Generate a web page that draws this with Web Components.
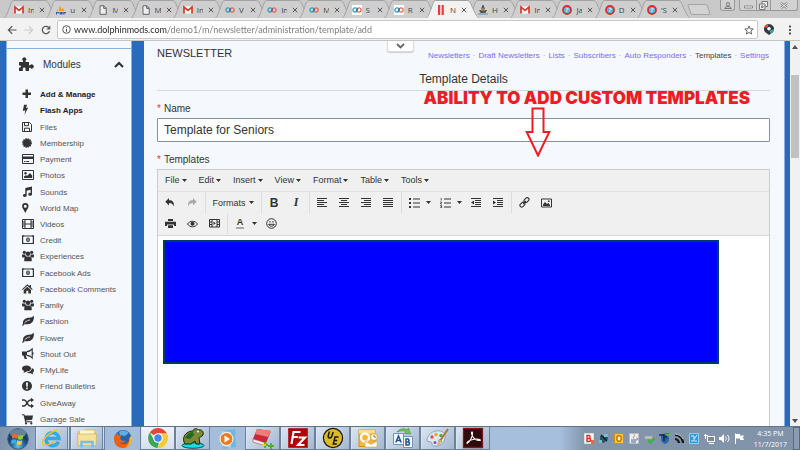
<!DOCTYPE html>
<html lang="en">
<head>
<meta charset="utf-8">
<title>Newsletter – Template Details</title>
<style>
  html, body { height: 100%; }
  body { margin: 0; overflow: hidden; font-family: "Liberation Sans", Arial, sans-serif; }
</style>
</head>
<body>
<app-window></app-window>
<script>
const AA = 'fill="none" stroke="currentColor"';
const infinity = bg => `${bg ? '<path fill="#fff" d="M0 0h10v10H0z"/>' : ''}<circle cx="3" cy="5" r="2.1" fill="none" stroke="#2ba3b5" stroke-width="1.3"/><circle cx="7" cy="5" r="2.1" fill="none" stroke="#ec6a4c" stroke-width="1.3"/><path d="M4 6.6 6 3.4" stroke="#3568d4" stroke-width="1.3"/>`;
const bars = (a) => a.map((r, i) => `<path d="M${r[0]} ${i * 2 + 1.5}h${r[1]}"/>`).join('');
const ICONS = {
  gmail: [10, 10, '<path fill="#fff" d="M1 1.5h8v7H1z"/><path d="M1 8.5V2l4 3.4L9 2v6.5" fill="none" stroke="#d8392f" stroke-width="1.7"/>'],
  pma: [10, 10, '<path fill="#f29b1c" d="M3 6C2.600 4 3 2 4.400.6 4.600 2.400 5 4 6.400 6zM6 6c0-1.600.2-2.600 1-3.400.2 1.400.8 2.400 1.800 3.400zM.6 6 2 3.600V6z"/><path fill="#36589e" d="M0 7h3v1.300H1V9.500H0zM3.600 7h3v2.500H3.600zM7.200 7H10v1.300H8.500v1.200H7.200z"/>'],
  page: [10, 10, '<path d="M2 .8h4l2.200 2.200v6.300H2zM5.700.8V3.400h2.500" fill="#eee" stroke="#666"/>'],
  loop: [10, 10, infinity(false)],
  loopw: [10, 10, infinity(true)],
  redbars: [10, 10, '<path fill="#ee3a34" d="M2 0h2.200v10H2zM5.600 0h2.200v10H5.600z"/>'],
  boat: [10, 10, '<path fill="#4a5960" d="M4.500 0h1l1.500 4H3zM1 5h8L7.500 8h-5z"/><path fill="#d78b42" d="M3 3.500h4v2H3z"/><path d="M0 9h10" stroke="#6c8c98"/>'],
  joomla: [10, 10, '<circle cx="5" cy="5" r="4" fill="#54b9e4" stroke="#e02a2f" stroke-width="1.800"/><path d="M4 3l2.500 1-2 1.500.5 1.500" fill="none" stroke="#d9f1fb" stroke-width=".9"/>'],
  close: [6, 6, `<path ${AA} d="M.8.8l4.400 4.400M5.200.8.8 5.200"/>`],
  back: [10, 10, `<path ${AA} stroke-width="1.200" d="M9.500 5H1.500M5.200 1.200 1.400 5l3.800 3.800"/>`],
  forward: [10, 10, `<path ${AA} stroke-width="1.200" d="M.5 5h8M4.800 1.200 8.600 5 4.800 8.800"/>`],
  reload: [10, 10, `<path ${AA} stroke-width="1.300" d="M8.500 6.300A3.700 3.700 0 1 1 7.700 2.400"/><path fill="currentColor" d="M9.300.5v4H5.300z"/>`],
  info: [9, 9, `<circle cx="4.500" cy="4.500" r="3.800" ${AA}/><path ${AA} d="M4.500 4v2.800M4.500 2.200v1"/>`],
  star: [10, 10, `<path ${AA} stroke-width=".9" d="M5 1l1.200 2.800 3 .2-2.300 2 .7 3L5 7.500 2.400 9l.7-3-2.300-2 3-.2z"/>`],
  pin2: [10, 11, '<path fill="#2f3b42" d="M5 0a5 5 0 0 1 4 8L5 11 1 8A5 5 0 0 1 5 0z"/><path fill="#e04b3a" d="M0 4a5 5 0 0 1 4-4v3z"/><path fill="#2fb3a2" d="M10 5a5 5 0 0 1-3 5L5.500 7z"/><circle cx="5" cy="4.800" r="1.800" fill="#fff"/>'],
  dots: [4, 10, '<path fill="currentColor" d="M1 .5h2v2H1zM1 4h2v2H1zM1 7.500h2v2H1z"/>'],
  puzzle: [15, 14, '<path fill="currentColor" d="M0 5h4V3.800a2 2 0 1 1 2.600 0V5H10v3.200h1.200a2 2 0 1 1 0 2.600H10V14H6.600v-2a1.400 1.400 0 0 0-2.800 0v2H0v-3.500h1a1 1 0 0 0 0-2H0z"/>'],
  up: [10, 7, `<path ${AA} stroke-width="2.200" d="M1 6l4-4 4 4"/>`],
  down: [9, 6, `<path ${AA} stroke-width="1.800" d="M1 1l3.500 3.500L8 1"/>`],
  plus: [12, 12, '<path fill="currentColor" d="M3.500 1.500h2.500v3h3V7H6v3H3.500V7h-3V4.500h3z"/>'],
  bolt: [12, 12, '<path fill="currentColor" d="M2 .8h3L4 4l2.200-.4L2.500 11l.8-4.800L.8 7z"/>'],
  save: [12, 12, `<path ${AA} d="M.5 1.500h7l2 2v7h-9zM2.500 1.500v3.200h4V1.500M2.500 10.500V7.200h5v3.300"/>`],
  seal: [12, 12, '<circle cx="5" cy="6" r="4" fill="currentColor"/><circle cx="5" cy="6" r="4.300" fill="none" stroke="currentColor" stroke-width="1.200" stroke-dasharray="1.400 .85"/>'],
  card: [12, 12, `<path ${AA} d="M.5 1.500h11v9H.5z"/><path fill="currentColor" d="M0 3.500h12V6H0zM2 8h1.500v1H2zM4.300 8H7v1H4.300z"/>`],
  photo: [12, 12, `<path ${AA} d="M.5 1.500h11v9H.5z"/><circle cx="3.500" cy="4.200" r="1.200" fill="currentColor"/><path fill="currentColor" d="M2 9V7.500L4 6l1 1 3-3 2.200 2.500V9z"/>`],
  music: [12, 12, '<path fill="currentColor" d="M3.300 2 10 .5v7.800a1.900 1.500 0 1 1-1.400-1.400V3.800L4.700 4.700v4.600A1.900 1.500 0 1 1 3.300 8z"/>'],
  marker: [12, 12, '<path fill="currentColor" fill-rule="evenodd" d="M3.300 1a3.200 3.200 0 0 1 3.200 3.300C6.500 6 4.500 8.500 3.300 11 2.100 8.500.1 6 .1 4.300A3.200 3.200 0 0 1 3.300 1zm0 1.700a1.500 1.500 0 1 0 0 3 1.500 1.500 0 0 0 0-3z"/>'],
  film: [12, 12, `<path ${AA} d="M.5 1.500h11v9H.5zM3 1.500v9M9 1.500v9M3 6h6M.5 4H3M.5 6H3M.5 8H3M9 4h2.500M9 6h2.500M9 8h2.500"/>`],
  money: [12, 12, `<path ${AA} stroke-width="1.200" d="M.6 2h10.800v7.500H.6z"/><path fill="currentColor" d="M0 1.500h2.500L0 4zM12 1.500H9.500L12 4zM0 10h2.500L0 7.500zM12 10H9.500L12 7.500z"/><ellipse cx="6" cy="5.700" rx="1.900" ry="2.300" fill="currentColor"/><path d="M6 4.300v2.800" stroke="#f5f8fd" stroke-width=".8"/>`],
  users: [12, 12, '<g fill="currentColor"><circle cx="2.300" cy="2.300" r="1.600"/><circle cx="9.700" cy="2.300" r="1.600"/><circle cx="6" cy="3.800" r="2.300"/><path d="M0 4.500h3.300c0 1.400.6 1.800 1 2.200L3 7.500H.8C0 7.300 0 6 0 4.500zM12 4.500H8.700c0 1.400-.6 1.800-1 2.200L9 7.500h2.200c.8-.2.8-1.500.8-3zM2.300 11.300C2 8.500 2.800 6.500 4 6.500h4c1.200 0 2 2 1.700 4.800z"/></g>'],
  home: [12, 12, '<path fill="currentColor" d="M0 6.200 5.300 1.300 7.500 3.300V2H9v2.600l1.700 1.600-.7.800-4.700-4.200L.7 7zM1.700 7l3.600-3.200L9 7v3.500H6.300V7.700h-2v2.800H1.700z"/>'],
  leaf: [12, 12, '<path fill="currentColor" d="M11.800.8c.6 5-1.800 8.400-6 8.400-1.500 0-2.600-.2-3.600.2L.8 11 0 10.200l1-1.300C.6 4.200 4 3 7.300 2.800 9.500 2.600 10.500 2 11.800.8z"/><path d="M2.500 8C4.500 5.800 6 5.200 8 5" fill="none" stroke="#f5f8fd" stroke-width=".8"/>'],
  horn: [12, 12, `<path fill="currentColor" d="M0 3.500h5v4H3.700L5 11H2.700L1.500 7.500H0z"/><path ${AA} stroke-width="1.100" d="M5 3.600C7.500 3.500 9 2.200 10.200 1v9C9 8.600 7.500 7.500 5 7.400M11 4.500v2"/>`],
  chat: [12, 12, '<g fill="currentColor"><path d="M4.500 1.500c2.500 0 4.500 1.300 4.500 3S7 7.500 4.500 7.500L1.500 9l.6-2C.8 6.500 0 5.500 0 4.500c0-1.700 2-3 4.500-3z"/><path d="M9.800 4c1.400.5 2.200 1.400 2.200 2.500 0 .8-.5 1.600-1.400 2.100l.8 1.900-2.700-1.300c-1.600.1-3-.3-3.900-1C7.700 8.300 9.800 6.600 9.800 4z"/></g>'],
  alert: [12, 12, '<circle cx="5" cy="6" r="5" fill="currentColor"/><path fill="#f5f8fd" d="M4 2.500h2l-.3 4.200H4.300zM4.200 7.600h1.600v1.600H4.200z"/>'],
  shuffle: [12, 12, `<path ${AA} stroke-width="1.500" d="M0 3h2.200c2.600 0 3 6 6 6H9.500M0 9h2.200c2.600 0 3-6 6-6H9.500"/><path fill="currentColor" d="M9 .8 12 3 9 5.200zM9 6.800 12 9l-3 2.200z"/>`],
  cart: [12, 12, `<path fill="currentColor" d="M0 1.300h2.400l.3 1.200H11l-.8 4.200-6.300.8.2.8h6v1H3.200L1.600 2.300H0z"/><circle cx="4" cy="10.400" r="1.100" fill="currentColor"/><circle cx="9.300" cy="10.400" r="1.100" fill="currentColor"/>`],
  caret: [5, 3, '<path fill="currentColor" d="M0 0h5L2.500 3z"/>'],
  undo: [10, 9, '<path fill="currentColor" d="M4 0v2.300c3.500 0 5.500 1.700 4.700 6.200C8 6 6.500 5 4 5v2.500L.3 3.700z"/>'],
  redo: [10, 9, '<path fill="#aaa" d="M6 0v2.300C2.500 2.300.5 4 1.300 8.500 2 6 3.500 5 6 5v2.500l3.700-3.800z"/>'],
  left: [10, 11, `<g ${AA}>${bars([[0,10],[0,7],[0,10],[0,7],[0,10]])}</g>`],
  center: [10, 11, `<g ${AA}>${bars([[0,10],[2,6],[0,10],[2,6],[0,10]])}</g>`],
  right: [10, 11, `<g ${AA}>${bars([[0,10],[3,7],[0,10],[3,7],[0,10]])}</g>`],
  full: [10, 11, `<g ${AA}>${bars([[0,10],[0,10],[0,10],[0,10],[0,10]])}</g>`],
  bullets: [11, 10, `<path fill="currentColor" d="M0 0h2v2H0zM0 4h2v2H0zM0 8h2v2H0z"/><path ${AA} stroke-width="1.200" d="M4 1h7M4 5h7M4 9h7"/>`],
  numbers: [11, 10, `<path ${AA} stroke-width=".8" d="M1.200 0v2.500M.2 4h1.500L.4 6h1.500M.2 7.700h1.500v2H.2M.7 8.700h1"/><path ${AA} stroke-width="1.200" d="M4 1h7M4 5h7M4 9h7"/>`],
  outdent: [10, 11, `<g ${AA}>${bars([[0,10],[4,6],[4,6],[4,6],[0,10]])}</g><path fill="currentColor" d="M3 3.500v4l-3-2z"/>`],
  indent: [10, 11, `<g ${AA}>${bars([[0,10],[4,6],[4,6],[4,6],[0,10]])}</g><path fill="currentColor" d="M0 3.500v4l3-2z"/>`],
  link: [11, 11, `<g ${AA} stroke-width="1.100"><rect x="5" y="1.500" width="5.500" height="3.500" rx="1.700" transform="rotate(-45 7.500 3.500)"/><rect x=".6" y="5.800" width="5.500" height="3.500" rx="1.700" transform="rotate(-45 3.500 7.500)"/><path d="M4 7l3-3"/></g>`],
  image: [11, 10, `<path ${AA} d="M.5 1h10v8H.5z"/><path fill="currentColor" d="M2 8V6.500L4 4l2 2 1.500-1L9 7v1zM7 2.500h1.500V4H7z"/>`],
  print: [11, 9, '<path fill="currentColor" d="M3 0h5v2H3zM0 2.700h11V7H9V5.500H2V7H0zM3 6.300h5V9H3z"/>'],
  eye: [11, 8, `<path ${AA} d="M.5 4C3 .3 8 .3 10.500 4 8 7.700 3 7.700.5 4z"/><circle cx="5.500" cy="3.700" r="2" fill="currentColor"/>`],
  media: [11, 9, `<path ${AA} d="M.5.500h10v7.500H.5zM3 .5v7.500M8 .5v7.500M.5 3H3M.5 5.500H3M8 3h2.500M8 5.500h2.500"/><path fill="currentColor" d="M4.500 2.500 6.800 4.300 4.500 6z"/>`],
  smiley: [11, 11, `<circle cx="5.500" cy="5.500" r="4.800" ${AA}/><path ${AA} d="M2.600 6.300c1 2.500 4.800 2.500 5.800 0zM4 3v1.700M7 3v1.700"/>`],
  arrow: [26, 50, '<path fill="none" stroke="#ee1c25" stroke-width="2" d="M7.500 1.500h11V25h5.800L13 48.500 1.700 25h5.800z"/>'],
  user: [8, 7, `<circle cx="4" cy="2.300" r="1.700" ${AA}/><path ${AA} d="M.5 6.500C1 4 7 4 7.500 6.500z"/>`],
  min: [9, 8, '<path fill="#fff" stroke="#888" d="M.5 5h8v2h-8z"/>'],
  restore: [9, 9, `<path fill="#eee" stroke="#777" d="M3 .5h5.500v5H3z"/><path fill="#eee" stroke="#777" d="M.5 3H6v5.500H.5zM2.500 5H4v1.500H2.500z"/>`],
  wclose: [8, 7, '<path d="M1 1l6 5M7 1 1 6" stroke="#888" stroke-width="2.400"/><path d="M1 1l6 5M7 1 1 6" stroke="#eee"/>'],
  triup: [6, 4, '<path fill="#505050" d="M0 4 3 0l3 4z"/>'],
  tridown: [6, 4, '<path fill="#505050" d="M0 0h6L3 4z"/>'],
  win: [22, 22, '<defs><radialGradient id="g" cy=".85"><stop stop-color="#5fc5ee"/><stop offset=".6" stop-color="#246ea8"/><stop offset="1" stop-color="#173f68"/></radialGradient></defs><circle cx="11" cy="11" r="10.300" fill="url(#g)" stroke="#3f5d7a"/><ellipse cx="11" cy="5.500" rx="8" ry="4.300" fill="#fff" opacity=".35"/><path fill="#f0652e" d="M5.500 6.500c2-1.200 3.500-1 5 0l-.8 4.300c-1.700-1-3.200-1-5 0z"/><path fill="#94c83d" d="M11.500 7c1.500.9 3.200.8 5-.2l-.9 4.300c-1.600.9-3.200.9-5 0z"/><path fill="#3fa9e0" d="M4.500 12c1.800-1 3.300-1 5 0l-.8 4c-1.500-.9-3.200-1-5 0z"/><path fill="#fdc82f" d="M10.300 12.300c1.800.9 3.400.9 5 0l-.8 4c-1.700.9-3.500.8-5 0z"/>'],
  ie: [22, 22, '<path fill="none" stroke="#35a9e0" stroke-width="3.500" d="M17.500 14.800A6.500 6.500 0 1 1 18 11.500H6"/><ellipse cx="11" cy="10.500" rx="11" ry="4.500" fill="none" stroke="#f0c22e" stroke-width="1.600" transform="rotate(-38 11 11)" stroke-dasharray="34 11" stroke-dashoffset="-13"/>'],
  folder: [22, 22, '<path fill="#e5c66b" d="M1.500 4h7l1-2h10v17h-18z"/><path fill="#fff6cf" d="M4 3.500h14v5H4z"/><path fill="#f7e29a" stroke="#c9a94d" stroke-width=".6" d="M1.500 7h19l-.5 11.500H2z"/><path fill="none" stroke="#72c0e5" stroke-width="2.500" d="M5.500 20.500V15h11v5.500"/>'],
  firefox: [22, 22, '<circle cx="11" cy="10.500" r="8.500" fill="#2a62a8"/><path fill="#57b2e5" d="M7 4c3-2.500 8-1.500 9.500 1L13 8 8 7z"/><path fill="#e8611c" d="M19.500 7c2 7-2 13-8.500 13C4 20 .5 14 2.500 7l1.500 1L5 4.500l2 2.800 2.500.2L8 10c1 3 4.500 3.500 6 2.500-1 2.500-4 3-6 2 3 3 9 1.500 9.500-4.500z"/><path fill="#fbc02d" d="M19.500 7c1.800 6-1 11-6 12.500 3-2.500 4.500-5 4-9z"/>'],
  chrome: [22, 22, '<path fill="#e2473a" d="M11 11 2.800 5.500A10 10 0 0 1 20 6.500H11z"/><path fill="#fbcb34" d="M11 6.500h9A10 10 0 0 1 10.500 21l4.300-8z"/><path fill="#3aa757" d="M10.500 21A10 10 0 0 1 2.800 5.500L7 13l5 2z"/><circle cx="11" cy="11" r="4.800" fill="#fff"/><circle cx="11" cy="11" r="3.700" fill="#4688ef"/>'],
  frog: [24, 22, '<ellipse cx="12" cy="18.500" rx="11" ry="2.800" fill="#15dbe6" stroke="#123" stroke-width=".8"/><path fill="#7b8a34" stroke="#1c270b" d="M3 15C1 9 6 4 12 4c1-3 4-3 5-1 4-1 6 2 5 5-1 2-4 2-4 3l1 6h-4l-1-3-4 3H4z"/><path fill="#1d6b22" d="M4 11c2-4 5-6 8-6l1 3-4 4z"/><circle cx="17" cy="4.500" r="1" fill="#fff"/>'],
  player: [22, 22, '<path fill="#71b7dc" d="M4 3l14-2 1 18-13 2z"/><path fill="#a7d6ee" d="M4 3l10 1v16l-9-2z"/><circle cx="9.500" cy="11" r="6.500" fill="#f17a1d" stroke="#fff"/><path fill="#fff" d="M7.500 7.500v7l5.500-3.500z"/>'],
  redbook: [22, 22, '<path fill="#c92935" d="M5 2l14 2-5 12L1 12z"/><path fill="#f07b7b" d="M5 2l14 2-3 6L3 7z"/><path fill="#eee" stroke="#a33" stroke-width=".5" d="M1 12l13 4v3L1 15z"/><path d="M10 18h6M13 15v6M16 19h6M19 16v6" stroke="#4fae2d" stroke-width="1.800"/><path d="M10 18h4" stroke="#f5ce2a" stroke-width="1.800"/>'],
  fz: [22, 22, '<path fill="#b30000" stroke="#8d0000" stroke-dasharray="1 1" d="M1.500 1.500h19v19h-19z"/><path d="M4.500 17 6.500 5h7M5.800 10h5M11.500 10.500h6.500L11 18h6.500" fill="none" stroke="#fff" stroke-width="2.200"/>'],
  ue: [22, 22, '<circle cx="11" cy="11" r="9.600" fill="#ddb92c" stroke="#19150a" stroke-width="1.200"/><path d="M7.500 4.500 6.200 9c-.4 2.600 3 2.600 3.600.3L11.200 5M16.500 10h-3.500l-1.700 7h3.500M12.300 13.500h3" fill="none" stroke="#1b160a" stroke-width="1.500"/>'],
  outlook: [22, 22, '<path fill="#f4b832" stroke="#d58f16" d="M2 2.500h16v17H2z"/><path d="M2 2.500h16v4H2z" fill="#fcdf83"/><circle cx="8" cy="10.500" r="4" fill="none" stroke="#fff" stroke-width="2.300"/><path fill="#fff" stroke="#d9a53a" stroke-width=".6" d="M8 14h12v6H8zl6 3.500 6-3.500"/><circle cx="17" cy="10" r="3.500" fill="#fff8e0" stroke="#d9a53a"/><path d="M17 8v2h2" stroke="#777" fill="none"/>'],
  ab: [22, 22, '<path fill="#f4f8fd" stroke="#7193bb" d="M1.500 6.500h10v11h-10zM11.500 9.500h9v11h-9z"/><path d="M3.800 15.500 6.500 9l2.700 6.500M4.800 13.500h3.400M14 12v6h2.300c1.500 0 1.500-3 0-3H14h2c1.300 0 1.300-3 0-3z" fill="none" stroke="#22558d" stroke-width="1.500"/><path fill="#75c15a" stroke="#3b8f2b" stroke-width=".6" d="M5 5c3-4 8-4 10-2l1.500-2 2 6-6-.5 1.500-2C12 3.500 9 3.500 5 5z"/>'],
  paint: [24, 22, '<path fill="#dbeaf5" stroke="#7898b2" stroke-width=".8" d="M10 4c6-1 10 2 9 7s-6 9-11 8c-3-.5-1-3-3-4s-4 .5-4-2 3-8 9-9z"/><circle cx="6" cy="10" r="1.700" fill="#e14d3b"/><circle cx="10" cy="7.500" r="1.700" fill="#f0a42b"/><circle cx="15" cy="8.500" r="1.700" fill="#48ab4c"/><circle cx="14" cy="14" r="1.800" fill="#3a7dd0"/><circle cx="9" cy="15.500" r="1.500" fill="#8550b8"/><path d="M22 2 14 14" stroke="#b77533" stroke-width="2"/><path d="M14.500 13 12 18" stroke="#e8b24a" stroke-width="2.500"/>'],
  acrobat: [22, 22, '<path fill="#2d0b0b" stroke="#7d1a15" stroke-width="1.300" d="M1.500 1.500h19v19h-19z"/><path d="M5 16.500c3-2 6-7 5.500-11-.2-1-1.300-.5-1 1 .7 4 4 7 7.500 7s0-2.200-5-1.200-7.500 3-7 4.200z" fill="none" stroke="#fff" stroke-width="1.100"/>'],
  t1: [10, 11, '<path fill="#fff" stroke="#ddd" d="M.5.500h9v10h-9z"/><path d="M3 2.500v6h2.300c1.700 0 1.700-3 0-3H3h2c1.500 0 1.500-3 0-3z" fill="none" stroke="#e02727" stroke-width="1.400"/><path fill="#f06a2a" d="M7 7h3v4H7z"/>'],
  t2: [10, 11, '<path fill="#29556d" d="M1 3h8v3l-4 4-4-1z"/><path fill="#6fc0d8" d="M5 1h4v3H5zM0 7h3v3H0z"/><path d="M2 2l6 6" stroke="#122" stroke-width="1.500"/>'],
  t3: [10, 11, '<path fill="#f7c840" stroke="#d48c10" d="M.5.500h9v10h-9z"/><ellipse cx="5" cy="5.500" rx="2.200" ry="2.800" fill="#fff3b5" stroke="#bb6c08" stroke-width="1.300"/>'],
  t4: [10, 11, '<path fill="#eceff2" stroke="#bbb" d="M.5.500h9v10h-9z"/><path d="M2 7h5c2 0 2-2 .5-2M2 9h5" fill="none" stroke="#3f6d9d"/><path d="M5 5.500c-2-2 2-2 0-4" fill="none" stroke="#df6a27"/>'],
  t5: [11, 11, '<path fill="#c5c8c9" stroke="#999" d="M.5 3h8v3h-8z"/><path d="M4 7l2.500 2.500L10.500 5" fill="none" stroke="#37b53b" stroke-width="2"/>'],
  t6: [11, 11, '<path fill="#2c62ad" d="M2 1l8-1v6c0 3-2 4-4 5C3 10 2 8 2 6z"/><path d="M0 2h5v6M4 4h4" stroke="#142b4a" stroke-width="1.500" fill="none"/><path fill="#4dc24c" d="M6 1h4v3z"/>'],
  t7: [10, 11, '<path d="M1 2c5 0 8 4 8 8M1 6c2 0 4 2 4 4" stroke="#161616" stroke-width="2.200" fill="none"/><path d="M1 1c3 0 7 2 8 5" stroke="#ccc" fill="none"/>'],
  t8: [10, 11, '<path fill="#2c9bda" stroke="#8dd1f4" d="M.5.500h9v10h-9z"/><path d="M2 3h3v3M8 2 4 8H2M5 8h3" stroke="#d5f0fd" fill="none"/>'],
  t9: [11, 11, '<path fill="#7d8894" stroke="#fff" d="M3.500 3.500h7v5h-7z"/><path d="M1.500 1v5M0 2.500h4M5 10.500h5" stroke="#fff"/>'],
  t10: [11, 11, '<path fill="#fff" d="M0 4h2l3-3v9L2 7H0z"/><path d="M6.500 3.500c1 1.500 1 2.500 0 4M8.500 2c2 2.500 2 4.500 0 7" stroke="#fff" fill="none"/>'],
  t11: [11, 11, '<path d="M1.500.5V11" stroke="#fff"/><path fill="#fff" d="M2 1h4v1.500h4L9 4.500 10 7H6V5.500H2z"/>']
};

function define(name, html, after) {
  const t = document.createElement('template');
  t.innerHTML = html;
  customElements.define(name, class extends HTMLElement {
    constructor() {
      super();
      this.attachShadow({ mode: 'open' }).append(t.content.cloneNode(true));
    }
    connectedCallback() { if (after) after(this.shadowRoot, this); }
  });
}

/* Puts the icon named by the host's icon attribute before the slotted label. */
function leadingIcon(root, el) {
  const holder = root.querySelector('.icon');
  if (holder.firstChild) return;
  const icon = document.createElement('ui-icon');
  icon.setAttribute('name', el.getAttribute('icon'));
  holder.append(icon);
}

define('ui-icon', `<style>:host{display:inline-flex;flex:none}svg{display:block}</style>`, (root, el) => {
  if (root.querySelector('svg')) return;
  const [w, h, body] = ICONS[el.getAttribute('name')];
  const box = document.createElement('template');
  box.innerHTML = `<svg width="${w}" height="${h}" viewBox="0 0 ${w} ${h}" aria-hidden="true">${body}</svg>`;
  root.append(box.content);
});

/* ---------- browser chrome ---------- */
define('browser-tab', `<style>
  :host{display:flex;align-items:center;position:relative;min-width:0;color:#444;font:8px "Open Sans","Noto Sans",sans-serif;gap:4px;padding:2px 0 0 8px;box-sizing:border-box}
  .shape{position:absolute;inset:0 -9px 0 -2px;z-index:0}
  .shape svg{width:100%;height:100%;display:block}
  path{fill:#cfcfcf;stroke:#a2a2a2;vector-effect:non-scaling-stroke}
  :host([active]){z-index:1}
  :host([active]) path{fill:#f2f2f2}
  .icon,.title,button{position:relative;z-index:1}
  .icon{display:flex}
  .title{width:6px;overflow:hidden;white-space:nowrap;line-height:12px}
  button{border:0;padding:0;background:none;color:#555;line-height:0;margin-left:1px}
</style><div class="shape"><svg viewBox="0 0 53 18" preserveAspectRatio="none"><path d="M-1 19C2 18 3 14 5 9S7 .5 10 .5H41C44 .5 45 5 47 9S51 18 54 19"/></svg></div>
<span class="icon"></span><span class="title"><slot></slot></span><button aria-label="Close tab"><ui-icon name="close"></ui-icon></button>`, leadingIcon);

define('tab-strip', `<style>
  :host{display:flex;height:18px;background:#c9c9c9;overflow:hidden}
  .tabs{flex:1;display:grid;grid-template-columns:repeat(16,1fr);padding-left:6px}
  .new{width:20px;height:11px;border:1px solid #a5a5a5;border-radius:2px;background:#d3d3d3;transform:skewX(20deg);margin:4px 0 0 8px;padding:0}
  .win{display:flex;margin:0 2px 0 11px;align-items:flex-start;color:#777}
  .win button{height:11px;border:1px solid #999;border-top:0;background:#d2d2d2;padding:0;display:flex;align-items:center;justify-content:center;color:#777}
  .u{width:15px;border-radius:0 0 3px 3px;margin-right:4px}
  .m{width:18px;border-radius:0 0 0 3px}.r{width:14px;border-left:0!important}.c{width:27px;border-left:0!important;border-radius:0 0 3px 0}
</style><div class="tabs">
<browser-tab icon="gmail">In</browser-tab><browser-tab icon="pma">u</browser-tab><browser-tab icon="page">M</browser-tab><browser-tab icon="page">M</browser-tab><browser-tab icon="gmail">In</browser-tab><browser-tab icon="loop">V</browser-tab><browser-tab icon="loop">In</browser-tab><browser-tab icon="loop">M</browser-tab><browser-tab icon="loopw">S</browser-tab><browser-tab icon="loopw">R</browser-tab><browser-tab icon="redbars" active>N</browser-tab><browser-tab icon="boat">H</browser-tab><browser-tab icon="gmail">In</browser-tab><browser-tab icon="joomla">Ja</browser-tab><browser-tab icon="joomla">D</browser-tab><browser-tab icon="joomla">'S</browser-tab>
</div><button class="new" aria-label="New tab"></button>
<div class="win"><button class="u" aria-label="Profile"><ui-icon name="user"></ui-icon></button><button class="m" aria-label="Minimize"><ui-icon name="min"></ui-icon></button><button class="r" aria-label="Restore"><ui-icon name="restore"></ui-icon></button><button class="c" aria-label="Close"><ui-icon name="wclose"></ui-icon></button></div>`);

define('address-bar', `<style>
  :host{display:flex;align-items:center;height:23px;background:#f2f2f2;border-bottom:1px solid #c4c4c4;box-sizing:border-box;padding:1px 8px 0 7px;color:#555}
  button{border:0;background:none;padding:0;line-height:0;color:inherit;margin-right:7px}
  .f{color:#ccc}
  .box{flex:1;display:flex;align-items:center;height:17px;border:1px solid #c8c8c8;border-radius:2px;background:#fff;padding:0 3px 0 4px;gap:3px;margin-left:-1px}
  .box button{margin:0}
  input{flex:1;min-width:0;border:0;outline:0;padding:0;font:9px/15px Lato,"Noto Sans",sans-serif;color:transparent;background:linear-gradient(90deg,#222 94px,#777 94px);-webkit-background-clip:text;background-clip:text}
  .ext{margin:0 14px 0 6px}.last{margin:0}
</style><button aria-label="Back"><ui-icon name="back"></ui-icon></button><button class="f" aria-label="Forward"><ui-icon name="forward"></ui-icon></button><button aria-label="Reload"><ui-icon name="reload"></ui-icon></button>
<div class="box"><ui-icon name="info"></ui-icon><input aria-label="Address" value="www.dolphinmods.com/demo1/m/newsletter/administration/template/add"><button aria-label="Bookmark"><ui-icon name="star"></ui-icon></button></div>
<button class="ext" aria-label="Extension"><ui-icon name="pin2"></ui-icon></button><button class="last" aria-label="Menu"><ui-icon name="dots"></ui-icon></button>`);

/* ---------- sidebar ---------- */
define('nav-item', `<style>
  :host{display:block}
  a{display:flex;align-items:center;height:100%;gap:6px;color:#555;text-decoration:none;font-size:8px;line-height:16px;white-space:nowrap}
  :host([strong]) a{font-weight:bold;color:#222}
  .icon{display:flex;color:#333;margin-bottom:2px}
</style><a href="#"><span class="icon"></span><slot></slot></a>`, leadingIcon);

define('side-nav', `<style>
  :host{display:flex;flex-direction:column;width:126px;margin-left:6px;background:#f5f8fd;border:solid #86b0e0;border-width:0 1px;box-sizing:border-box;overflow:hidden;flex:none}
  .prev{height:7px;flex:none;border-bottom:1px solid #86b0e0}
  .head{display:flex;align-items:center;height:30px;flex:none;border:0;background:none;padding:0 7px 0 12px;font:10px "Liberation Sans",Arial,sans-serif;color:#333;text-align:left}
  .head span{flex:1;padding-left:9px}
  nav{display:grid;grid-template-rows:repeat(21,1fr);height:341px;flex:none;padding:8px 0 0 15px}
</style><div class="prev"></div><button class="head"><ui-icon name="puzzle"></ui-icon><span>Modules</span><ui-icon name="up"></ui-icon></button>
<nav><nav-item strong icon="plus">Add &amp; Manage</nav-item><nav-item strong icon="bolt">Flash Apps</nav-item><nav-item icon="save">Files</nav-item><nav-item icon="seal">Membership</nav-item><nav-item icon="card">Payment</nav-item><nav-item icon="photo">Photos</nav-item><nav-item icon="music">Sounds</nav-item><nav-item icon="marker">World Map</nav-item><nav-item icon="film">Videos</nav-item><nav-item icon="money">Credit</nav-item><nav-item icon="users">Experiences</nav-item><nav-item icon="money">Facebook Ads</nav-item><nav-item icon="home">Facebook Comments</nav-item><nav-item icon="users">Family</nav-item><nav-item icon="leaf">Fashion</nav-item><nav-item icon="leaf">Flower</nav-item><nav-item icon="horn">Shout Out</nav-item><nav-item icon="chat">FMyLife</nav-item><nav-item icon="alert">Friend Bulletins</nav-item><nav-item icon="shuffle">GiveAway</nav-item><nav-item icon="cart">Garage Sale</nav-item></nav>`);

/* ---------- editor ---------- */
const tb = (icon, label) => `<button aria-label="${label}"><ui-icon name="${icon}"></ui-icon></button>`;
const cb = label => `<button class="car" aria-label="${label} options"><ui-icon name="caret"></ui-icon></button>`;
define('rich-editor', `<style>
  :host{display:flex;flex-direction:column;border:1px solid #ccc;border-bottom:0;background:#fff;color:#333}
  .chrome{background:#f0f0f0;border-bottom:1px solid #d5d5d5;padding-bottom:1px}
  button{border:0;background:none;padding:0;margin:0;color:inherit;font:9px "Liberation Sans",Arial,sans-serif;display:flex;align-items:center;justify-content:center;height:21px}
  .menu{display:flex;border-bottom:1px solid #e2e2e2}
  .menu button{padding:0 5px 1px 7px;gap:2px}
  .row{display:flex;height:21px}
  .g{display:flex;padding:0 2px 0 1px;border-right:1px solid #dcdcdc}
  .g:last-child{border:0}
  .g button{width:22px}
  .g .fm{width:52px;gap:3px}
  .g .car{width:9px;justify-content:flex-start;padding-left:1px}
  .b{font:bold 12px "Liberation Sans",Arial,sans-serif}
  .i{font:italic bold 12px "Liberation Serif",serif}
  .a{border-bottom:2px solid #aaa;font-weight:bold;line-height:9px;padding:0 1px}
  .doc{flex:1;padding:4px 50px 0 5px}
  .block{height:120px;background:#00f;border:2px solid #003a6b}
</style><div class="chrome"><div class="menu">${['File','Edit','Insert','View','Format','Table','Tools'].map(x => `<button>${x}<ui-icon name="caret"></ui-icon></button>`).join('')}</div>
<div class="row"><div class="g">${tb('undo','Undo')}${tb('redo','Redo')}</div><div class="g"><button class="fm">Formats<ui-icon name="caret"></ui-icon></button></div><div class="g"><button><span class="b">B</span></button><button><span class="i">I</span></button></div><div class="g">${tb('left','Align left')}${tb('center','Align center')}${tb('right','Align right')}${tb('full','Justify')}</div><div class="g">${tb('bullets','Bullet list')}${cb('Bullet')}${tb('numbers','Numbered list')}${cb('Number')}${tb('outdent','Decrease indent')}${tb('indent','Increase indent')}</div><div class="g">${tb('link','Link')}${tb('image','Image')}</div></div>
<div class="row"><div class="g">${tb('print','Print')}${tb('eye','Preview')}${tb('media','Video')}</div><div class="g"><button><span class="a">A</span></button>${cb('Colour')}${tb('smiley','Emoticons')}</div></div></div>
<div class="doc"><div class="block"></div></div>`);

define('call-out', `<style>
  :host{position:absolute;right:34px;top:48px;display:flex;flex-direction:column;align-items:flex-start;color:#ee1c25;font:900 17px/18px Inter,"Open Sans",sans-serif;white-space:nowrap;pointer-events:none}
  ui-icon{margin-left:101px}
</style><slot></slot><ui-icon name="arrow"></ui-icon>`);

define('template-page', `<style>
  :host{display:flex;flex-direction:column;position:relative;flex:1;min-width:0;margin-left:12px;background:#f5f8fd;border-right:1px solid #86b0e0;padding:0 14px 0 13px;box-sizing:border-box;color:#333;overflow:hidden}
  header{display:flex;align-items:center;height:23px;flex:none}
  h1{font-size:11px;font-weight:normal;margin:0;flex:1}
  nav{display:flex;gap:3px;font-size:8px;padding:5px 1px 0 0;color:#999;white-space:nowrap}
  a{color:#7b6cf0;text-decoration:none}
  a.on{color:#444}
  h2{font-size:12px;font-weight:normal;line-height:22px;margin:4px 0 8px;text-align:center;border-bottom:1px solid #d5d9dd}
  label{font-size:10px;line-height:19px}
  label i{color:#e33;font-style:normal;margin-right:3px}
  input{font:12px "Liberation Sans",Arial,sans-serif;color:#333;border:1px solid #8492a6;border-radius:1px;height:24px;box-sizing:border-box;padding:0 6px;margin:0 0 8px;width:100%;outline:0}
  rich-editor{flex:1}
</style><header><h1>NEWSLETTER</h1><nav><a href="#">Newsletters</a> <span>·</span> <a href="#">Draft Newsletters</a> <span>·</span> <a href="#">Lists</a> <span>·</span> <a href="#">Subscribers</a> <span>·</span> <a href="#">Auto Responders</a> <span>·</span> <a href="#" class="on">Templates</a> <span>·</span> <a href="#">Settings</a></nav></header>
<h2>Template Details</h2>
<label for="n"><i>*</i>Name</label><input id="n" value="Template for Seniors">
<label id="t"><i>*</i>Templates</label><rich-editor role="group" aria-labelledby="t"></rich-editor>
<call-out>ABILITY TO ADD CUSTOM TEMPLATES</call-out>`);

define('scroll-bar', `<style>
  :host{display:flex;flex-direction:column;align-items:center;width:10px;margin-left:5px;background:#f1f1f1;padding:4px 0 3px;box-sizing:border-box}
  .track{flex:1;width:8px;padding-top:26px}.thumb{height:83px;background:#c1c1c1}
</style><ui-icon name="triup"></ui-icon><div class="track"><div class="thumb"></div></div><ui-icon name="tridown"></ui-icon>`);

/* ---------- taskbar ---------- */
define('task-bar', `<style>
  :host{display:flex;height:24px;background:linear-gradient(90deg,#7f93ad,#a4bcd9 60px,#a6bfdd 560px,#8395ac 585px,#8193a9);border-top:1px solid #5f738c;box-sizing:border-box}
  button{border:0;background:none;padding:0;display:flex;align-items:center;justify-content:center;width:35px}
  .run{border:1px solid #6b819c;border-top:0;box-shadow:inset 1px 0 #d8e4f2;background:linear-gradient(135deg,#dbe5f1,#a3b8d1);box-sizing:border-box}
  .lit{background:linear-gradient(#eef3f9,#d5dfec)}
  .stack{border-right:3px double #6b819c}
  .tray{margin-left:auto;display:flex;align-items:center}
  .tray button{width:15px}
  .clock{color:#fff;font:7px/11px "Open Sans","Noto Sans",sans-serif;text-align:center;margin:0 6px 0 7px}
  .desk{width:7px!important;height:23px;border:1px solid #596b82!important;background:#8a9cb3;box-sizing:border-box}
</style><button aria-label="Start"><ui-icon name="win"></ui-icon></button>${[['ie','run stack'],['folder','run stack'],['firefox',''],['chrome','run lit'],['frog','run'],['player',''],['redbook','run'],['fz','run'],['ue','run'],['outlook','run'],['ab','run'],['paint','run'],['acrobat','run']].map(([n, c]) => `<button class="${c}" aria-label="${n}"><ui-icon name="${n}"></ui-icon></button>`).join('')}
<div class="tray">${Array.from({length: 11}, (_, i) => `<button aria-label="Tray ${i + 1}"><ui-icon name="t${i + 1}"></ui-icon></button>`).join('')}<div class="clock"><div>4:35 PM</div><div>11/7/2017</div></div><button class="desk" aria-label="Show desktop"></button></div>`);

define('app-window', `<style>
  :host{display:flex;flex-direction:column;height:100vh;min-height:0}
  tab-strip,address-bar,task-bar{flex:none}
  main{flex:1;min-height:0;display:flex;background:#286bbc;position:relative;overflow:hidden}
  .pull{position:absolute;top:0;left:50%;margin-left:-13px;width:27px;height:11px;border:1px solid #ddd;border-top:0;border-radius:0 0 3px 3px;background:#fff;padding:0;display:flex;align-items:center;justify-content:center;color:#666;box-shadow:0 1px 1px #ccc}
</style><tab-strip></tab-strip><address-bar></address-bar>
<main><side-nav></side-nav><template-page></template-page><scroll-bar></scroll-bar><button class="pull" aria-label="Expand"><ui-icon name="down"></ui-icon></button></main><task-bar></task-bar>`);
</script>
</body>
</html>
